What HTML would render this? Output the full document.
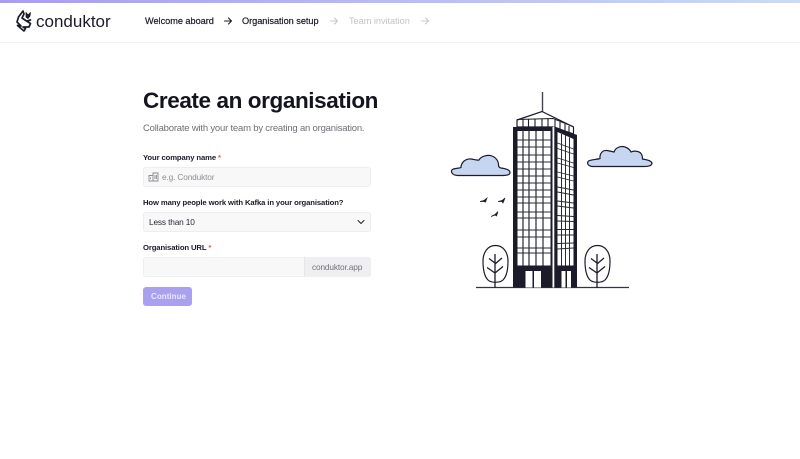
<!DOCTYPE html>
<html><head><meta charset="utf-8"><style>
html,body{margin:0;padding:0;background:#fff;width:800px;height:459px;overflow:hidden;font-family:"Liberation Sans",sans-serif}
.t{position:absolute;white-space:nowrap;line-height:1}
.box{position:absolute;box-sizing:border-box;background:#f8f8f9;border:1px solid #eeeef0;border-radius:3px}
.s{color:#e8583c}
.l{font-size:7.7px;letter-spacing:-.12px;font-weight:bold;color:#1b1b2b}
.n{font-size:9.200px;letter-spacing:-.03px}
.i{font-size:8.300px;letter-spacing:-.15px}
</style></head><body>
<div style="position:absolute;left:0;top:0;width:800px;height:3px;background:linear-gradient(90deg,#a99cf0,#c9dcf6)"></div>
<div style="position:absolute;left:0;top:42px;width:800px;height:1px;background:#f2f2f3"></div>

<svg style="position:absolute;left:15px;top:9px" width="20" height="24" viewBox="0 0 20 24" fill="none" stroke="#1b1b2b" stroke-width="1.7" stroke-linejoin="round" stroke-linecap="round"><path d="M8 2 L3.500 8 L2 13 L6 17 L2.500 16.500 L9 22 L10.500 19.500 L8 18 L14 18 L15.500 14.500 L10 11 L7 9 L9 5 Z"/><path d="M11 3.500 L13 6 L15.500 3.500 L15 7 L13 9.500 L11 8 Z" fill="#1b1b2b" stroke-width=".8"/><path d="M12 12 L15.500 11"/></svg>
<div class="t" style="left:36px;top:13px;font-size:17px;color:#1b1b2b">conduktor</div>

<div class="t n" style="left:145px;top:16.500px;color:#1b1b2b;-webkit-text-stroke:.2px #1b1b2b">Welcome aboard</div>
<div class="t n" style="left:242px;top:16.500px;color:#1b1b2b;-webkit-text-stroke:.2px #1b1b2b">Organisation setup</div>
<div class="t n" style="left:349px;top:16.500px;color:#c4c4c9">Team invitation</div>
<svg style="position:absolute;left:222px;top:15px" width="212" height="12" fill="none" stroke-width="1.100" stroke-linecap="round" stroke-linejoin="round"><path d="M2.500 6H9.500M6.500 3L9.500 6L6.500 9" stroke="#1b1b2b"/><path d="M108.500 6H115.500M112.500 3L115.500 6L112.500 9" stroke="#c8c8cc"/><path d="M199.500 6H206.500M203.500 3L206.500 6L203.500 9" stroke="#c8c8cc"/></svg>

<div class="t" style="left:143px;top:89.500px;font-size:22.500px;letter-spacing:-.4px;font-weight:bold;color:#14141f">Create an organisation</div>
<div class="t" style="left:143px;top:124px;font-size:9.500px;letter-spacing:-.2px;color:#6f6f78">Collaborate with your team by creating an organisation.</div>

<div class="t l" style="left:143px;top:153.500px">Your company name <span class="s">*</span></div>
<div class="box" style="left:143px;top:167px;width:228px;height:20px"></div>
<svg style="position:absolute;left:148px;top:172px" width="11" height="10" fill="none" stroke="#8b8b92" stroke-width=".9"><path d="M1 3.500H5V9H1ZM5 1H10V9H5ZM7 3V7M8.500 3V7M2.500 5.500V7"/></svg>
<div class="t i" style="left:162px;top:172.500px;color:#8f8f96">e.g. Conduktor</div>

<div class="t l" style="left:143px;top:198.500px">How many people work with Kafka in your organisation?</div>
<div class="box" style="left:143px;top:212px;width:228px;height:20px"></div>
<div class="t i" style="left:149px;top:217.500px;color:#2a2a36">Less than 10</div>
<svg style="position:absolute;left:357px;top:219px" width="8" height="6" fill="none" stroke="#2a2a36" stroke-width="1.100" stroke-linecap="round" stroke-linejoin="round"><path d="M1 1.500L4 4.500L7 1.500"/></svg>

<div class="t l" style="left:143px;top:243.500px">Organisation URL <span class="s">*</span></div>
<div class="box" style="left:143px;top:257px;width:228px;height:20px"></div>
<div style="position:absolute;left:304px;top:257px;width:67px;height:20px;box-sizing:border-box;background:#efeff1;border-left:1px solid #e6e6e9;border-radius:0 3px 3px 0"></div>
<div class="t i" style="left:312px;top:262.500px;color:#72727a">conduktor.app</div>

<div style="position:absolute;left:143px;top:287px;width:49px;height:19px;background:#a9a1f0;border-radius:3px"></div>
<div class="t" style="left:151px;top:292.500px;font-size:8px;letter-spacing:.05px;font-weight:bold;color:#e9e7fc">Continue</div>

<svg style="position:absolute;left:440px;top:85px" width="225" height="210" viewBox="440 85 225 210">
<path d="M476 287.500H629" stroke="#33333f" stroke-width="1.200"/>
<path d="M458 175.500C452 175.500 450 171 452.500 169.500C455 168 459 168.500 461 167.500C461 162 466 158.500 471 159C475 159.500 477 160.500 479 160C481 156 488 154.500 492 156C496 157.500 498.500 161 498.500 165C498.500 166.500 499 167.500 501 168C505 168.500 510 169.500 510 172.500C510 175 507 175.500 503 175.500Z" fill="#c6d5f0" stroke="#1b1b2b" stroke-width="1.200"/>
<path d="M592 166.500C588 166 586.500 163 588.500 161C591 159.500 597 159.500 600 158.500C599.500 153 603 150 607 150.500C610 151 612 151.500 614 152C615.500 147.500 621 145.500 625 147C628 148 630 150 631 152C634 150.500 639 151 641 153.500C642.500 155.500 642.500 157.500 642.500 159C645 159.500 651 160 652 163C652 166 648 166.500 644 166.500Z" fill="#c6d5f0" stroke="#1b1b2b" stroke-width="1.200"/>
<path d="M480 201.500L484 200.500L487 198L485.500 202L484 201.500ZM498 201.500L502 200.500L505 198L503 203L502 201.500ZM491 216.500L495 214.500L498 211.500L496.500 216L495 215Z" fill="#1b1b2b" stroke="#1b1b2b" stroke-width=".7"/>
<g fill="#fff" stroke="#1b1b2b" stroke-width="1.200" stroke-linecap="round">
<path d="M495.500 245.500C488 245.500 483 252 483 261C483 268 484 276 488 280C491 283 500 283 503 280C507 276 508 268 508 261C508 252 503 245.500 495.500 245.500Z"/>
<path d="M597.500 245.500C590 245.500 585 252 585 261C585 268 586 276 590 280C593 283 602 283 605 280C609 276 610 268 610 261C610 252 605 245.500 597.500 245.500Z"/>
</g>
<g fill="none" stroke="#1b1b2b" stroke-width="1.300">
<path d="M495 254V287.500M495 263L489 258.500M495 264L502 258M495 273L487 267.500M495 273L503 266.500"/>
<path d="M597 254V287.500M597 263L591 258.500M597 264L604 258M597 273L589 267.500M597 273L605 266.500"/>
</g>
<path d="M542.500 92V112" stroke="#44444f" stroke-width="1.400"/>
<path d="M517 120L542 111.500L573.500 127V134L553 127H517Z" fill="#fff" stroke="#1b1b2b" stroke-width="1.200"/>
<path d="M517 119.500L553 118.500L573 126.500" fill="none" stroke="#1b1b2b" stroke-width="1"/>
<path d="M523 119V127M528.500 119V127M535 119V127M542 119V127M548 119V127M555 120V128M560 122V130M565 124V132M569 126V133" stroke="#1b1b2b" stroke-width="1.100" fill="none"/>
<path d="M513 127H556L577 135V287.500H513Z" fill="#1b1b2b"/>
<rect x="552.500" y="127" width="1.800" height="160.500" fill="#fff"/>
<rect x="517.500" y="131" width="33" height="134.500" fill="#fff"/>
<path d="M557.500 132L573.500 139V265.500H557.500Z" fill="#fff"/>
<g fill="none" stroke="#2a2a36">
<path d="M523 131V265.500M529 131V265.500M536 131V265.500M543 131V265.500" stroke-width="1.200"/>
<path d="M517.500 140H550.500M517.500 147H550.500M517.500 155H550.500M517.500 162H550.500M517.500 169H550.500M517.500 176H550.500M517.500 183H550.500M517.500 190H550.500M517.500 197H550.500M517.500 203H550.500M517.500 212H550.500M517.500 218H550.500M517.500 230H550.500M517.500 237H550.500M517.500 248H550.500M517.500 253H550.500" stroke-width="1"/>
<path d="M561.500 134V265.500M565.500 135.500V265.500M569.500 137.500V265.500" stroke-width="1"/>
<path d="M557.500 143L573.500 149M557.500 148.500L573.500 154M557.500 158L573.500 163M557.500 163L573.500 167.500M557.500 172L573.500 176M557.500 177L573.500 181M557.500 187L573.500 190M557.500 192L573.500 195M557.500 201L573.500 203M557.500 206L573.500 208M557.500 215.500L573.500 216.500M557.500 221L573.500 221.500M557.500 229.500H573.500M557.500 235H573.500M557.500 243.500L573.500 243M557.500 249L573.500 248" stroke-width=".9"/>
</g>
<rect x="525.500" y="271" width="7" height="16.500" fill="#fff"/>
<rect x="534" y="271" width="7" height="16.500" fill="#fff"/>
<rect x="561.500" y="271" width="4" height="16.500" fill="#fff"/>
<rect x="567" y="271" width="4" height="16.500" fill="#fff"/>
</svg>
</body></html>
